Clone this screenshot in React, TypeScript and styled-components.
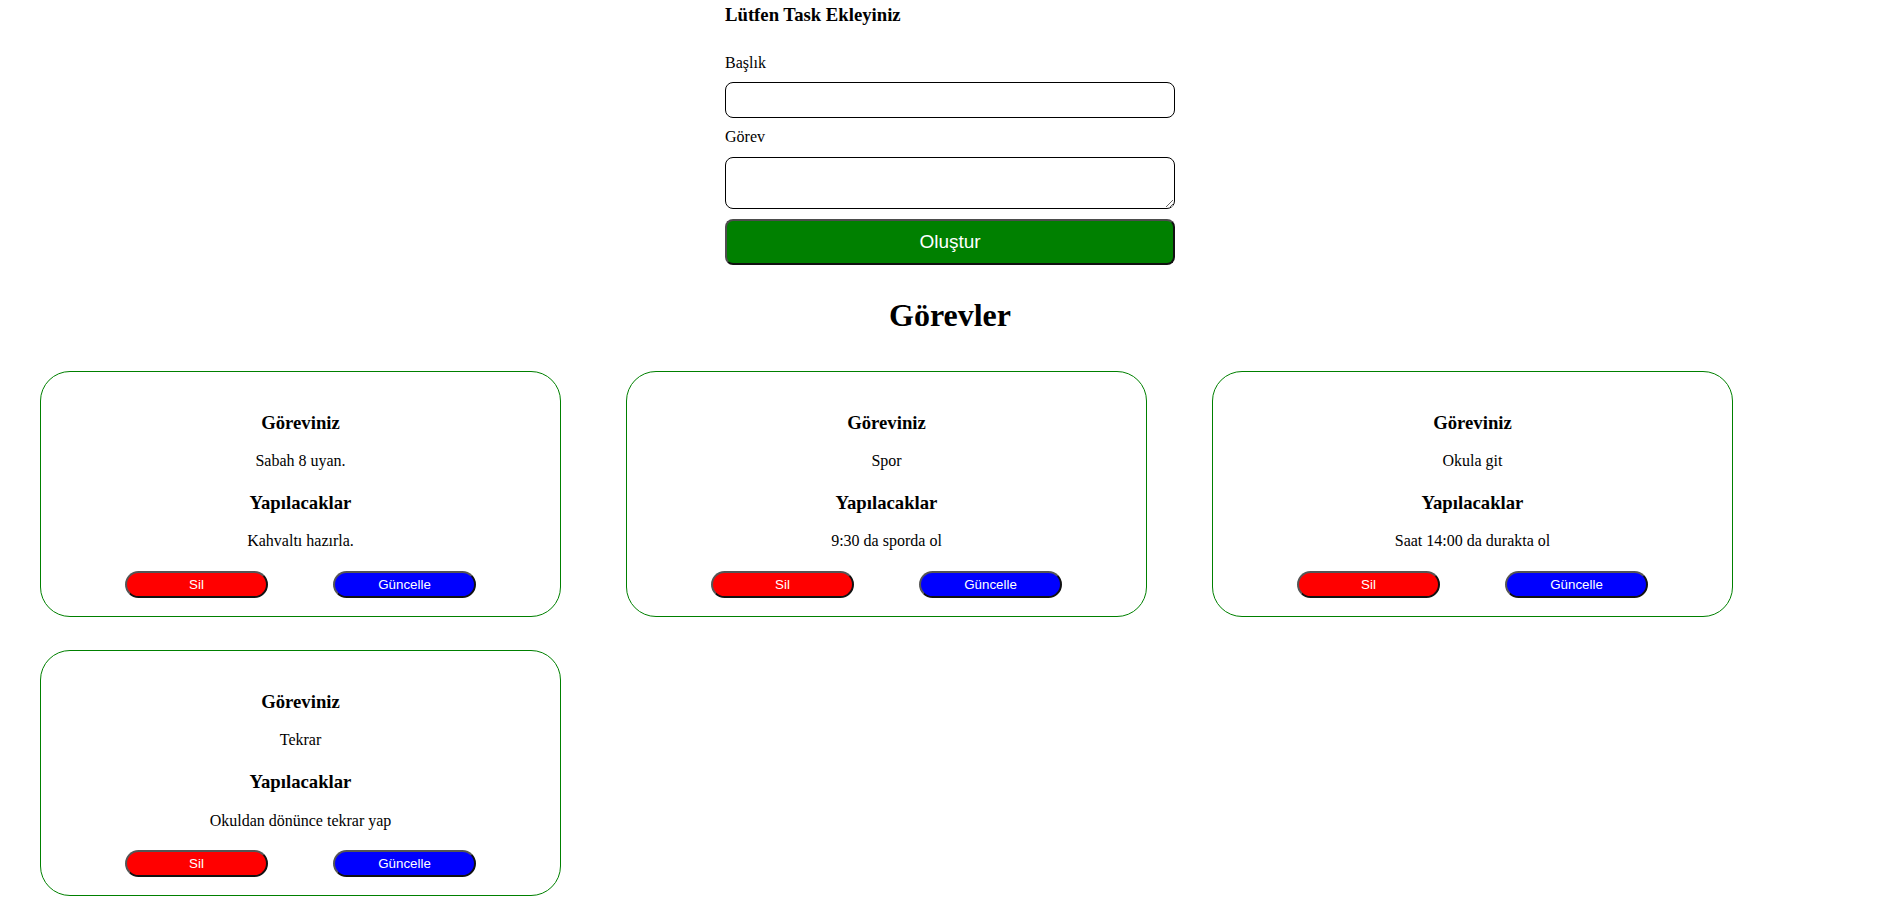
import React from "react";
import styled, { createGlobalStyle } from "styled-components";

const GlobalStyle = createGlobalStyle`
  html, body {
    margin: 0;
    padding: 0;
    background: #ffffff;
    color: #000000;
    font-family: "Liberation Serif", "Times New Roman", serif;
    font-size: 16px;
  }
  * { box-sizing: border-box; }
`;

const Page = styled.div`
  display: flex;
  flex-direction: column;
  padding-bottom: 8px;
`;

const Form = styled.form`
  width: 450px;
  margin: 0 auto;
  padding-top: 4px;
  display: flex;
  flex-direction: column;
  gap: 10px;
`;

const FormTitle = styled.h3`
  margin: 0 0 18px;
  font-size: 18.72px;
  font-weight: bold;
`;

const Label = styled.label`
  display: block;
  font-size: 16px;
  line-height: 18.4px;
`;

const TextInput = styled.input`
  display: block;
  width: 100%;
  height: 36px;
  border: 1px solid #000000;
  border-radius: 8px;
  padding: 0 8px;
  font-family: "Liberation Sans", Arial, sans-serif;
  font-size: 14px;
  background: #ffffff;
`;

const TextArea = styled.textarea`
  display: block;
  width: 100%;
  height: 52px;
  border: 1px solid #000000;
  border-radius: 8px;
  padding: 4px 8px;
  font-family: "Liberation Sans", Arial, sans-serif;
  font-size: 14px;
  background: #ffffff;
`;

const SubmitButton = styled.button`
  display: block;
  width: 100%;
  height: 46px;
  background: #008000;
  color: #ffffff;
  border-width: 2px;
  border-style: solid;
  border-color: #4d4d4d #111111 #111111 #4d4d4d;
  border-radius: 8px;
  font-family: "Liberation Sans", Arial, sans-serif;
  font-size: 19px;
  cursor: pointer;
`;

const SectionTitle = styled.h1`
  margin: 32px 0 37px;
  text-align: center;
  font-size: 32px;
  font-weight: bold;
  line-height: 36.8px;
`;

const CardGrid = styled.div`
  display: flex;
  flex-wrap: wrap;
  column-gap: 65px;
  row-gap: 33px;
  padding-left: 40px;
`;

const Card = styled.div`
  width: 521px;
  border: 1px solid #008000;
  border-radius: 30px;
  padding: 18px 20px 18px;
  text-align: center;
`;

const CardHeading = styled.h3`
  margin: 22px 0 18.72px;
  font-size: 18.72px;
  font-weight: bold;
  line-height: 21.5px;
`;

const CardText = styled.p`
  margin: 16px 0;
  font-size: 16px;
  line-height: 18.4px;
`;

const ButtonRow = styled.div`
  display: flex;
  justify-content: center;
  gap: 65px;
  margin-top: 20px;
`;

const ActionButton = styled.button<{ $variant: "delete" | "update" }>`
  width: 143px;
  height: 27px;
  border-radius: 14px;
  border-width: 2px;
  border-style: solid;
  border-color: #555555 #111111 #111111 #555555;
  background: ${(p) => (p.$variant === "delete" ? "#ff0000" : "#0000ff")};
  color: #ffffff;
  font-family: "Liberation Sans", Arial, sans-serif;
  font-size: 13.33px;
  padding: 0;
  cursor: pointer;
`;

type Task = { title: string; todo: string };

const tasks: Task[] = [
  { title: "Sabah 8 uyan.", todo: "Kahvaltı hazırla." },
  { title: "Spor", todo: "9:30 da sporda ol" },
  { title: "Okula git", todo: "Saat 14:00 da durakta ol" },
  { title: "Tekrar", todo: "Okuldan dönünce tekrar yap" },
];

export default function App() {
  return (
    <>
      <GlobalStyle />
      <Page>
        <Form onSubmit={(e) => e.preventDefault()}>
          <FormTitle>Lütfen Task Ekleyiniz</FormTitle>
          <Label htmlFor="baslik">Başlık</Label>
          <TextInput id="baslik" type="text" />
          <Label htmlFor="gorev">Görev</Label>
          <TextArea id="gorev" />
          <SubmitButton type="submit">Oluştur</SubmitButton>
        </Form>
        <SectionTitle>Görevler</SectionTitle>
        <CardGrid>
          {tasks.map((t, i) => (
            <Card key={i}>
              <CardHeading>Göreviniz</CardHeading>
              <CardText>{t.title}</CardText>
              <CardHeading>Yapılacaklar</CardHeading>
              <CardText>{t.todo}</CardText>
              <ButtonRow>
                <ActionButton $variant="delete">Sil</ActionButton>
                <ActionButton $variant="update">Güncelle</ActionButton>
              </ButtonRow>
            </Card>
          ))}
        </CardGrid>
      </Page>
    </>
  );
}
